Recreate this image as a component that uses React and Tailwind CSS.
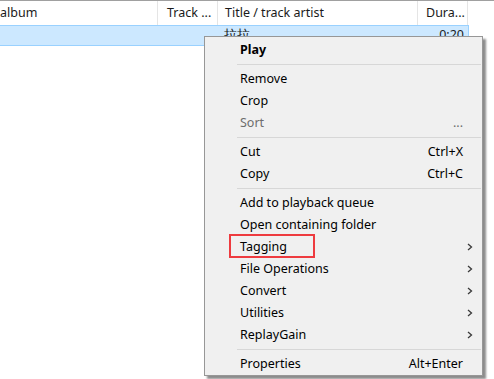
const font = { fontFamily: '"Noto Sans", "Segoe UI", sans-serif' };

const columns = [
  { label: "album", w: "w-[158px]", pad: "pl-0" },
  { label: "Track ...", w: "w-[60px]", pad: "pl-[9px]" },
  { label: "Title / track artist", w: "w-[200px]", pad: "pl-[7px]" },
  { label: "Dura...", w: "w-[50px]", pad: "pl-[8px]" },
];

const menu = [
  { label: "Play", bold: true },
  "sep",
  { label: "Remove" },
  { label: "Crop" },
  { label: "Sort", disabled: true, hint: "..." },
  "sep",
  { label: "Cut", hint: "Ctrl+X" },
  { label: "Copy", hint: "Ctrl+C" },
  "sep",
  { label: "Add to playback queue" },
  { label: "Open containing folder" },
  { label: "Tagging", sub: true, marked: true },
  { label: "File Operations", sub: true },
  { label: "Convert", sub: true },
  { label: "Utilities", sub: true },
  { label: "ReplayGain", sub: true },
  "sep",
  { label: "Properties", hint: "Alt+Enter" },
];

function Arrow() {
  return (
    <svg width="6" height="8" viewBox="0 0 6 8" className="absolute right-[9px] top-[7px]">
      <polyline points="1,1 4.5,4 1,7" fill="none" stroke="#3a3a3a" strokeWidth="1.3" />
    </svg>
  );
}

function MenuRow({ item }) {
  return (
    <div className="relative flex h-[22px] items-center pl-[35px] pr-[19px]">
      <span
        className={
          "flex-1 " +
          (item.bold ? "font-bold text-black" : item.disabled ? "text-[#6d6d6d]" : "text-black")
        }
      >
        {item.label}
      </span>
      {item.hint && (
        <span className={item.disabled ? "text-[#6d6d6d]" : "text-black"}>{item.hint}</span>
      )}
      {item.sub && <Arrow />}
      {item.marked && (
        <div className="absolute left-[24px] top-[-2px] h-[24px] w-[86px] border-2 border-[#ee3b3f]" />
      )}
    </div>
  );
}

export default function App() {
  return (
    <div className="relative h-[379px] w-[494px] overflow-hidden bg-white text-[12.5px]" style={font}>
      <div className="h-[1px] bg-[#a0a0a0]" />
      <div className="flex h-[24px] items-center text-[#1a1a1a]">
        {columns.map((c) => (
          <div
            key={c.label}
            className={`${c.w} ${c.pad} flex h-full items-center overflow-hidden whitespace-nowrap border-r border-[#e5e5e5]`}
          >
            {c.label}
          </div>
        ))}
      </div>
      <div className="flex h-[21px] w-[469px] items-center border-y border-r border-[#99d1ff] bg-[#cce8ff] text-[#1a1a1a]">
        <div className="w-[224px]" />
        <div className="flex-1">拉拉</div>
        <div className="pr-[4px]">0:20</div>
      </div>

      <div className="absolute left-[204px] top-[36px] w-[279px] border border-[#979797] bg-[#f0f0f0] pt-[2px] shadow-[3px_3px_2px_rgba(0,0,0,0.45)]">
        {menu.map((item, i) =>
          item === "sep" ? (
            <div key={i} className="flex h-[7px] items-center pl-[32px] pr-[1px]">
              <div className="h-[1px] w-full bg-[#d7d7d7]" />
            </div>
          ) : (
            <MenuRow key={i} item={item} />
          )
        )}
      </div>
    </div>
  );
}
